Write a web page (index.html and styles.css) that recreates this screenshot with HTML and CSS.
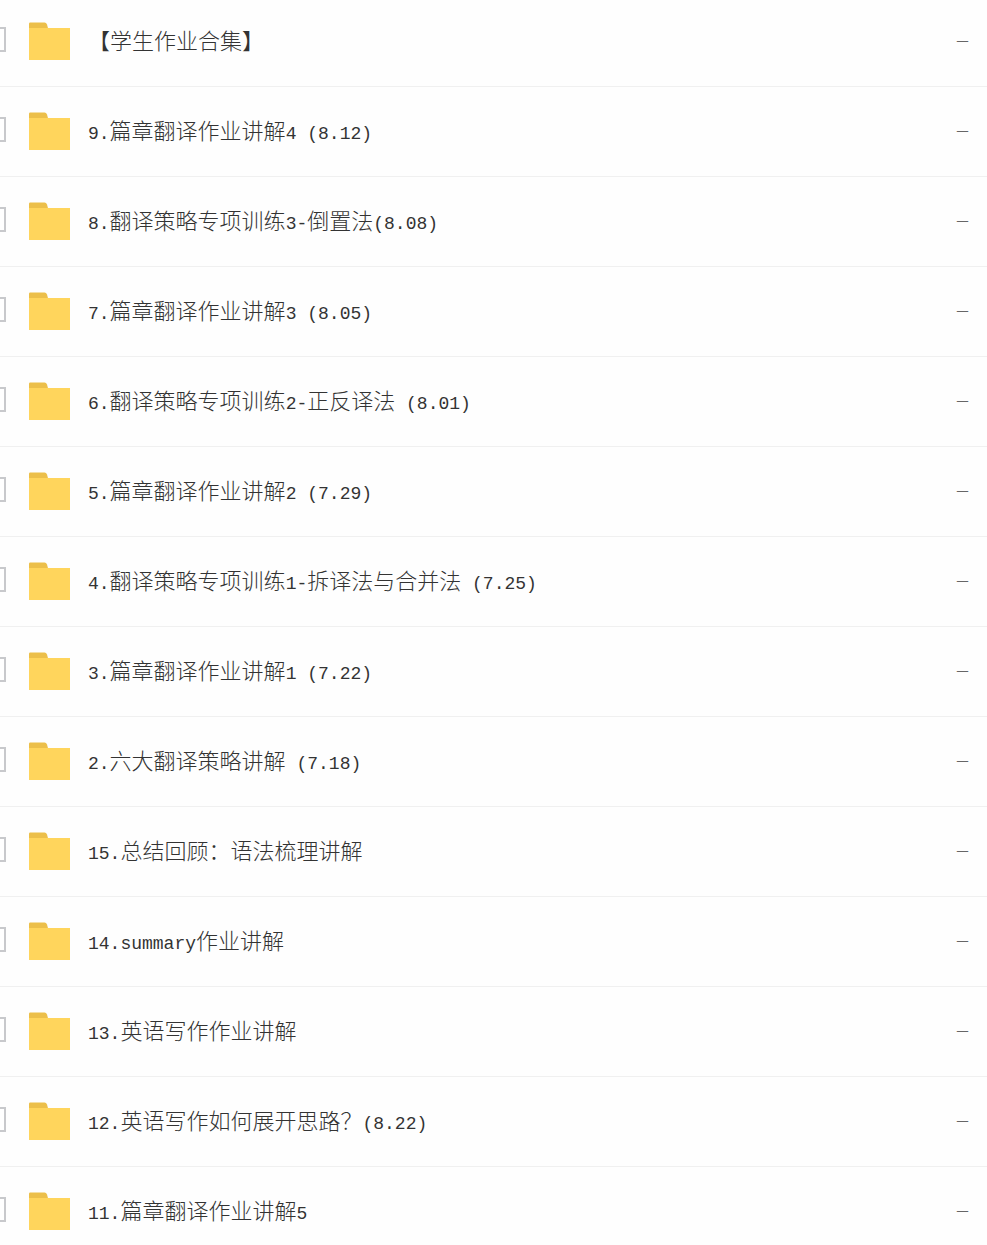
FILE: index.html
```
<!DOCTYPE html>
<html lang="zh-CN">
<head>
    <meta charset="UTF-8">
    <title>全部文件</title>
    <link rel="stylesheet" href="styles.css">
</head>
<body>
<svg width="0" height="0" class="sprite">
    <symbol id="folder" viewBox="0 0 41 38">
        <path d="M0 1.5Q0 .4 1.2 .4H15.5Q17.3 .4 18 2.4L19.5 8H0Z" fill="#ecbf4a"/>
        <path d="M0 6H41V38H0Z" fill="#ffd55c"/>
    </symbol>
</svg>

<ul class="file-list" id="fileList"></ul>

<script>
    const files = [
        "【学生作业合集】",
        "9.篇章翻译作业讲解4 (8.12)",
        "8.翻译策略专项训练3-倒置法(8.08)",
        "7.篇章翻译作业讲解3 (8.05)",
        "6.翻译策略专项训练2-正反译法 (8.01)",
        "5.篇章翻译作业讲解2 (7.29)",
        "4.翻译策略专项训练1-拆译法与合并法 (7.25)",
        "3.篇章翻译作业讲解1 (7.22)",
        "2.六大翻译策略讲解 (7.18)",
        "15.总结回顾：语法梳理讲解",
        "14.summary作业讲解",
        "13.英语写作作业讲解",
        "12.英语写作如何展开思路？(8.22)",
        "11.篇章翻译作业讲解5"
    ];

    // latin letters and digits get their own font
    function formatName(name) {
        return name.replace(/[\x20-\x7e]+/g, part => `<span class="latin">${part}</span>`);
    }

    document.getElementById('fileList').innerHTML = files.map((name, i) =>
        `<li class="file-row">
            <input type="checkbox" class="file-check" id="file${i}" aria-label="${name}">
            <svg class="file-icon"><use href="#folder"/></svg>
            <a class="file-name" href="#">${formatName(name)}</a>
            <span class="file-size">–</span>
        </li>`).join("");
</script>
</body>
</html>
```
FILE: styles.css
```
body {
    margin: 0;
    height: 100vh;
    overflow: hidden;
    background: #fefefe;
    color: #333;
    font-family: "Noto Sans CJK SC", sans-serif;
    font-size: 22px;
    font-weight: 300;
}

.sprite {
    display: block;
}

/* the list is scrolled a little, its left edge is cut off */
.file-list {
    list-style: none;
    margin: -3px 0 0 -19px;
    padding: 0;
}

.file-row {
    display: flex;
    align-items: center;
    box-sizing: border-box;
    height: 90px;
    padding: 0 19px 2px 0;
    border-bottom: 1px solid #f0f0f0;
}

.file-check {
    appearance: none;
    box-sizing: border-box;
    width: 25px;
    height: 25px;
    margin: 0 23px 2px 0;
    border: 2px solid #c8c9cc;
    background: #fff;
    cursor: pointer;
}

.file-check:checked {
    background: #06a7ff;
}

.file-icon {
    flex: none;
    width: 41px;
    height: 38px;
    margin-right: 18px;
}

.file-name {
    flex: 1;
    padding-bottom: 4px;
    color: #333;
    line-height: 32px;
    text-decoration: none;
    white-space: pre;
}

.file-name:hover {
    color: #06a7ff;
}

.latin {
    font-family: "Liberation Mono", monospace;
    font-size: 18px;
    line-height: 1;
}

.file-size {
    padding-bottom: 2px;
    color: #666;
    font-family: "Liberation Serif", serif;
}
```
